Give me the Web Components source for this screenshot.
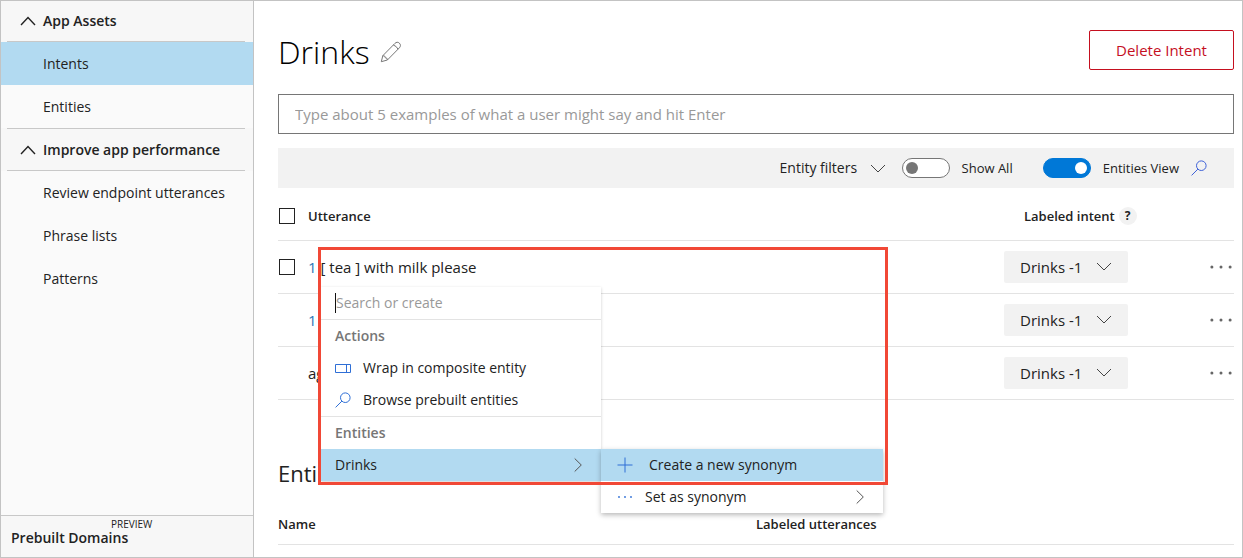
<!DOCTYPE html>
<html lang="en">
<head>
<meta charset="utf-8">
<meta name="viewport" content="width=device-width, initial-scale=1">
<title>Drinks - Intents</title>
<style>
  body { margin: 0; background: #fff; color: #222; font: 14px/20px "Open Sans", "Noto Sans", sans-serif; }
</style>
</head>
<body>
<luis-app></luis-app>

<script>
const base = `
  *, *::before { box-sizing: border-box; }
  button, input, select { font: inherit; color: inherit; margin: 0; border-radius: 0; }
  button { background: none; border: 0; padding: 0; cursor: pointer; }
  a { color: inherit; text-decoration: none; }
  h1, h2, h3, ul { margin: 0; padding: 0; list-style: none; font-weight: inherit; }
`;

class Base extends HTMLElement {
  connectedCallback() {
    if (this.shadowRoot) return;
    this.attachShadow({ mode: 'open' }).innerHTML = `<style>${base}${this.css()}</style>${this.html()}`;
  }
  css() { return ''; }
  html() { return '<slot></slot>'; }
  attr(n) { return this.getAttribute(n) || ''; }
}

const icons = {
  up: ['0 0 16 10', '<path d="M1 9 8 1.5 15 9" stroke-width="1.4"/>'],
  down: ['0 0 16 9', '<path d="M1 1 8 8 15 1"/>'],
  right: ['0 0 8 14', '<path d="M.7.5 7.3 7 .7 13.5"/>'],
  search: ['0 0 16 16', '<circle cx="10.3" cy="5.7" r="4.8"/><path d="M6.9 9.1.6 15.4"/>'],
  pencil: ['0 0 22 22', '<path d="M1.3 20.7 2.8 14.7 14.8 2.5C16.3 1 18 .8 19.3 2.1 20.8 3.5 20.8 5.3 19.4 6.8L7.4 19Z"/><path d="M2.8 14.7Q5.6 14.6 5.3 16.8 7.5 16.6 7.4 19M13.3 4Q16.6 5 18 8.2"/>'],
  composite: ['0 0 16 9', '<path d="M.5.5H15.5V8.5H.5ZM11.5.5V8.5"/>'],
  plus: ['0 0 16 16', '<path d="M8 .5V15.5M.5 8H15.5"/>'],
  dots: ['0 0 22 4', '<g fill="currentColor" stroke="none"><circle cx="1.9" cy="2" r="1.5"/><circle cx="11" cy="2" r="1.5"/><circle cx="20.1" cy="2" r="1.5"/></g>'],
  smalldots: ['0 0 16 4', '<g fill="currentColor" stroke="none"><circle cx="2" cy="2" r=".9"/><circle cx="8" cy="2" r=".9"/><circle cx="14" cy="2" r=".9"/></g>']
};

customElements.define('ui-icon', class extends Base {
  css() {
    const [, , w, h] = icons[this.attr('name')][0].split(' ');
    return `:host { display: inline-block; flex: none; width: ${w}px; height: ${h}px; }
      svg { display: block; width: 100%; height: 100%; fill: none; stroke: currentColor; stroke-width: 1; overflow: visible; }`;
  }
  html() {
    const [box, shape] = icons[this.attr('name')];
    return `<svg viewBox="${box}" aria-hidden="true">${shape}</svg>`;
  }
});

customElements.define('nav-section', class extends Base {
  css() { return `
    :host { display: block; }
    .head { display: flex; align-items: center; gap: 7px; width: 100%; height: 43px; padding: 0 19px; background: #f7f7f7;
      font-weight: 600; text-align: left; position: relative; }
    :host([first]) .head { height: 41px; padding-bottom: 2px; }
    .head::before { content: ""; position: absolute; inset: 0 8px 0 6px; border-top: 1px solid #c8c8c8; border-bottom: 1px solid #c8c8c8; pointer-events: none; }
    :host([first]) .head::before { border-top: 0; }`; }
  html() { return `<button class="head" aria-expanded="true"><ui-icon name="up"></ui-icon>${this.attr('label')}</button><nav aria-label="${this.attr('label')}"><slot></slot></nav>`; }
});

customElements.define('nav-item', class extends Base {
  css() { return `
    :host { display: block; }
    a { display: flex; align-items: center; height: 43px; padding: 0 42px; white-space: nowrap; }
    :host([selected]) a { background: #b2daf1; }`; }
  html() { return `<a href="#"><slot></slot></a>`; }
});

customElements.define('side-bar', class extends Base {
  css() { return `
    :host { display: flex; flex-direction: column; background: #fafafa; border-right: 1px solid #c3c3c3; }
    .foot { margin-top: auto; display: flex; flex-direction: column; height: 42px; padding: 3px 10px; background: #f7f7f7; border-top: 1px solid #c8c8c8; font-weight: 600; }
    small { font-size: 10px; line-height: 10px; font-weight: 400; padding-left: 100px; }
    .foot span { line-height: 18px; }`; }
  html() { return `
    <nav-section first label="App Assets"><nav-item selected>Intents</nav-item><nav-item>Entities</nav-item></nav-section>
    <nav-section label="Improve app performance"><nav-item>Review endpoint utterances</nav-item><nav-item>Phrase lists</nav-item><nav-item>Patterns</nav-item></nav-section>
    <a class="foot" href="#"><small>PREVIEW</small><span>Prebuilt Domains</span></a>`; }
});

customElements.define('toggle-switch', class extends Base {
  css() { return `
    :host { display: block; }
    label { display: flex; align-items: center; gap: 12px; font-size: 13px; white-space: nowrap; }
    input { appearance: none; display: flex; align-items: center; width: 48px; height: 20px; border: 1px solid #767676; border-radius: 10px; background: #fff; padding: 0 3px; }
    input::before { content: ""; width: 12px; height: 12px; border-radius: 50%; background: #767676; }
    input:checked { background: #0078d7; border-color: #0078d7; justify-content: flex-end; }
    input:checked::before { background: #fff; }`; }
  html() { return `<label><input type="checkbox" role="switch" ${this.hasAttribute('checked') ? 'checked' : ''}><slot></slot></label>`; }
});

customElements.define('drop-down', class extends Base {
  css() { return `
    :host { display: inline-grid; grid-template-columns: 1fr auto; align-items: center; height: 32px; }
    :host([filled]) { background: #f2f2f2; border-radius: 2px; width: 124px; font-size: 15px; }
    select { appearance: none; border: 0; background: none; grid-area: 1 / 1 / 2 / 3; height: 100%; padding: 0 28px 0 0; }
    :host([filled]) select { padding: 0 16px; }
    ui-icon { grid-area: 1 / 2; pointer-events: none; color: #444; }
    :host([filled]) ui-icon { margin-right: 16px; }`; }
  html() { return `<select aria-label="${this.attr('label')}"><option>${this.attr('value')}</option></select><ui-icon name="down"></ui-icon>`; }
});

customElements.define('utterance-tool-bar', class extends Base {
  css() { return `
    :host { display: flex; justify-content: flex-end; align-items: center; height: 40px; margin-top: 14px; padding-right: 27px; background: #f2f2f2; }
    drop-down { margin-right: 16px; }
    toggle-switch { margin-right: 30px; }
    toggle-switch:last-of-type { margin-right: 12px; }
    button { color: #3f62d8; display: flex; }`; }
  html() { return `
    <drop-down label="Entity filters" value="Entity filters"></drop-down>
    <toggle-switch>Show All</toggle-switch>
    <toggle-switch checked>Entities View</toggle-switch>
    <button aria-label="Search"><ui-icon name="search"></ui-icon></button>`; }
});

const tableCss = `
  :host { display: block; }
  table { width: 100%; border-collapse: collapse; table-layout: fixed; }
  th, td { padding: 0; height: 53px; border-bottom: 1px solid #e3e3e3; text-align: left; font-weight: 400; }
  th, thead td { height: 52px; padding-top: 4px; font-size: 13px; font-weight: 600; }`;

customElements.define('utterance-table', class extends Base {
  css() { return tableCss + `
    .check { width: 30px; }
    .intent { width: 170px; }
    .more { width: 60px; }
    tbody { font-size: 15px; }
    .more button { display: flex; margin-left: auto; margin-right: 2px; color: #666; }
    input { appearance: none; display: block; width: 16px; height: 16px; margin-left: 1px; border: 1px solid #222; background: #fff; }
    .head { display: flex; align-items: center; gap: 4px; padding-left: 20px; white-space: nowrap; }
    .help { width: 18px; height: 18px; line-height: 18px; border-radius: 50%; background: #f2f2f2; text-align: center; font-weight: 700; font-size: 12px; }
    drop-down { vertical-align: middle; }
    .num { color: #2b78b8; }`; }
  html() {
    const rows = [
      [true, '<span class="num">1</span> [ tea ] with milk please'],
      [false, '<span class="num">1</span>'],
      [false, 'ag']
    ];
    return `<table>
      <thead><tr>
        <th class="check"><input type="checkbox" aria-label="Select all utterances"></th><th>Utterance</th>
        <th class="intent"><span class="head">Labeled intent <button class="help" aria-label="About labeled intent">?</button></span></th><td class="more"></td>
      </tr></thead>
      <tbody>${rows.map(([check, text]) => `<tr>
        <td class="check">${check ? '<input type="checkbox" aria-label="Select utterance">' : ''}</td><td>${text}</td>
        <td class="intent"><drop-down filled label="Labeled intent" value="Drinks -1"></drop-down></td>
        <td class="more"><button aria-label="More options"><ui-icon name="dots"></ui-icon></button></td></tr>`).join('')}
      </tbody></table>`;
  }
});

customElements.define('entity-table', class extends Base {
  css() { return tableCss + ` th { height: 45px; }`; }
  html() { return `<table><thead><tr><th>Name</th><th>Labeled utterances</th></tr></thead></table>`; }
});

customElements.define('menu-item', class extends Base {
  css() { return `
    :host { display: block; }
    button { display: flex; align-items: center; gap: 12px; width: 100%; height: 32px; padding: 0 19px 0 14px; text-align: left; white-space: nowrap; }
    :host([selected]) button { background: #b2daf1; }
    :host([sub]) button { padding-left: 16px; }
    .lead { color: #2f6fd6; }
    .lead[name=plus] { margin-right: 4px; }
    .arrow { margin-left: auto; color: #555; }`; }
  html() { return `<button role="menuitem">
    ${this.attr('icon') ? `<ui-icon class="lead" name="${this.attr('icon')}"></ui-icon>` : ''}<slot></slot>
    ${this.hasAttribute('arrow') ? '<ui-icon class="arrow" name="right"></ui-icon>' : ''}</button>`; }
});

customElements.define('entity-menu', class extends Base {
  css() { return `
    :host { display: block; width: 280px; background: #fff; box-shadow: 0 1px 3px rgba(0,0,0,.2); font-size: 14px; }
    .search { display: flex; align-items: center; height: 33px; padding: 0 14px; border-bottom: 1px solid #e3e3e3; }
    .search::before { content: ""; height: 20px; border-left: 1px solid #111; }
    .search input { border: 0; padding: 0; outline: 0; background: none; flex: 1; min-width: 0; }
    ::placeholder { color: #999; opacity: 1; }
    h3 { font-size: 14px; line-height: 32px; font-weight: 600; color: #767676; padding-left: 14px; }
    .group { border-top: 1px solid #e3e3e3; }
    .sub { position: absolute; left: 100%; bottom: -32px; width: 282px; background: #fff; box-shadow: 0 2px 5px rgba(0,0,0,.28); }`; }
  html() { return `
    <div class="search"><input type="text" placeholder="Search or create" aria-label="Search or create"></div>
    <h3>Actions</h3>
    <menu-item icon="composite">Wrap in composite entity</menu-item>
    <menu-item icon="search">Browse prebuilt entities</menu-item>
    <div class="group"><h3>Entities</h3><menu-item selected arrow>Drinks</menu-item></div>
    <div class="sub" role="menu">
      <menu-item sub selected icon="plus">Create a new synonym</menu-item>
      <menu-item sub arrow icon="smalldots">Set as synonym</menu-item>
    </div>`; }
});

customElements.define('intent-page', class extends Base {
  css() { return `
    :host { display: block; min-width: 0; padding: 29px 8px 12px 24px; position: relative; }
    header { display: flex; justify-content: space-between; align-items: center; height: 40px; margin-bottom: 24px; }
    .title { display: flex; align-items: center; gap: 10px; padding-top: 4px; }
    h1 { font-size: 32px; line-height: 40px; font-weight: 300; color: #000; }
    .title button { display: flex; color: #777; }
    .delete { height: 40px; padding: 0 24px; border: 1px solid #c50f1f; border-radius: 2px; color: #c50f1f; font-size: 15px; white-space: nowrap; width: 145px; }
    .say { display: block; width: 100%; height: 40px; padding: 0 16px; border: 1px solid #767676; background: #fff; font-size: 15px; }
    .say::placeholder { color: #999; opacity: 1; }
    h2 { font-size: 22px; line-height: 30px; margin-top: 58px; margin-bottom: 12px; font-weight: 400; }
    .callout { position: absolute; left: 64px; top: 246px; width: 570px; height: 238px; }
    .callout::after { content: ""; position: absolute; inset: 0; box-sizing: border-box; border: 3px solid #f14836; pointer-events: none; z-index: 2; }
    entity-menu { position: absolute; left: 3px; bottom: 4px; }`; }
  html() { return `
    <header><div class="title"><h1>Drinks</h1><button aria-label="Rename intent"><ui-icon name="pencil"></ui-icon></button></div>
      <button class="delete">Delete Intent</button></header>
    <input class="say" type="text" aria-label="Example utterance" placeholder="Type about 5 examples of what a user might say and hit Enter">
    <utterance-tool-bar></utterance-tool-bar>
    <utterance-table></utterance-table>
    <h2>Enti</h2>
    <entity-table></entity-table>
    <div class="callout"><entity-menu></entity-menu></div>`; }
});

customElements.define('luis-app', class extends Base {
  css() { return `:host { display: grid; grid-template-columns: 253px minmax(0, 1fr); min-height: 100vh; border: 1px solid #c3c3c3; box-sizing: border-box; }`; }
  html() { return `<side-bar></side-bar><intent-page></intent-page>`; }
});
</script>
</body>
</html>
